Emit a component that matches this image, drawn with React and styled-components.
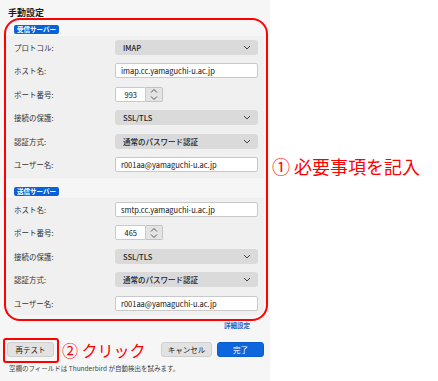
import React from 'react';
import styled, { createGlobalStyle } from 'styled-components';

// --- GLOBAL STYLES ---
const GlobalStyle = createGlobalStyle`
    body {
        margin: 0;
        background: #ffffff;
        font-family: "Noto Sans CJK JP", "Noto Sans", sans-serif;
        color: #222;
    }
`;

const Page = styled.div`
    position: relative;
    width: 438px;
    height: 381px;
    overflow: hidden;
`;

const Panel = styled.div`
    width: 270px;
    height: 381px;
    box-sizing: border-box;
    background: #f6f6f6;
    padding: 6px 6px 0 6px;
    display: flex;
    flex-direction: column;
`;

const Title = styled.div`
    font-size: 9px;
    font-weight: 700;
    line-height: 14px;
    padding-left: 2px;
    color: #1a1a1a;
`;

const Badge = styled.div`
    align-self: flex-start;
    margin: ${p => p.$top}px 0 2px 8px;
    background: #0a62d6;
    color: #fff;
    font-size: 6.5px;
    font-weight: 700;
    line-height: 9px;
    padding: 0 3px;
    border-radius: 2px;
`;

const Section = styled.div`
    background: #f0f0f0;
    display: grid;
    grid-template-columns: 101px 143px;
    row-gap: 8.4px;
    padding: ${p => p.$pt}px 6px ${p => p.$pb}px 8px;
    align-items: center;
`;

const Label = styled.div`
    font-size: 7.5px;
    color: #333;
    line-height: 15px;
`;

const Select = styled.div`
    height: 15px;
    box-sizing: border-box;
    background: #dadada;
    border-radius: 3px;
    display: flex;
    align-items: center;
    justify-content: space-between;
    padding: 0 7px 0 8px;
    font-size: 7.5px;
    font-weight: 500;
    color: #222;
`;

const Input = styled.div`
    height: 15px;
    box-sizing: border-box;
    background: #fff;
    border: 1px solid #c9c9c9;
    border-radius: 2px;
    display: flex;
    align-items: center;
    padding: 0 5px;
    font-size: 7.5px;
    color: #111;
`;

const PortWrap = styled.div`
    display: flex;
    height: 15px;
`;

const PortInput = styled(Input)`
    width: 31px;
    justify-content: flex-end;
    padding-right: 8px;
    border-radius: 2px 0 0 2px;
`;

const Spinner = styled.div`
    width: 17px;
    box-sizing: border-box;
    background: #e4e4e4;
    border: 1px solid #c3c3c3;
    border-left: none;
    border-radius: 0 2px 2px 0;
    display: flex;
    flex-direction: column;
    align-items: center;
    justify-content: space-around;
`;

const Link = styled.div`
    align-self: flex-end;
    margin: 6px 14px 0 0;
    font-size: 6.5px;
    font-weight: 700;
    color: #1a62c8;
    line-height: 9px;
`;

const ButtonRow = styled.div`
    display: flex;
    align-items: center;
    margin-top: 12px;
    padding-left: 1px;
`;

const Button = styled.div`
    height: 15px;
    box-sizing: border-box;
    width: ${p => p.$w}px;
    margin-left: ${p => p.$ml || 0}px;
    display: flex;
    align-items: center;
    justify-content: center;
    font-size: 7.5px;
    border-radius: 3px;
    background: ${p => (p.$primary ? '#0d66dc' : '#e2e2e2')};
    color: ${p => (p.$primary ? '#fff' : '#222')};
    border: 1px solid ${p => (p.$primary ? '#0b5ccc' : '#cfcfcf')};
`;

const Note = styled.div`
    margin-top: 7px;
    padding-left: 3px;
    font-size: 6.5px;
    color: #444;
    line-height: 9px;
`;

// --- annotations drawn over the screenshot ---
const RedBox = styled.div`
    position: absolute;
    left: ${p => p.$x}px;
    top: ${p => p.$y}px;
    width: ${p => p.$w}px;
    height: ${p => p.$h}px;
    box-sizing: border-box;
    border: 2px solid #ff0000;
    border-radius: ${p => p.$r}px;
    pointer-events: none;
`;

const Callout = styled.div`
    position: absolute;
    left: ${p => p.$x}px;
    top: ${p => p.$y}px;
    color: #ff0000;
    font-size: ${p => p.$size}px;
    line-height: 1;
    white-space: nowrap;
`;

const Chevron = () => (
    <svg width="8" height="5" viewBox="0 0 8 5">
        <path d="M1 1 L4 4 L7 1" fill="none" stroke="#444" strokeWidth="1" />
    </svg>
);

const Arrow = ({ up }) => (
    <svg width="8" height="4" viewBox="0 0 8 4">
        <path d={up ? 'M1 3.5 L4 0.5 L7 3.5' : 'M1 0.5 L4 3.5 L7 0.5'} fill="none" stroke="#555" strokeWidth="1" />
    </svg>
);

const Port = ({ value }) => (
    <PortWrap>
        <PortInput>{value}</PortInput>
        <Spinner>
            <Arrow up />
            <Arrow />
        </Spinner>
    </PortWrap>
);

const Drop = ({ children }) => (
    <Select>
        <span>{children}</span>
        <Chevron />
    </Select>
);

const App = () => (
    <Page>
        <GlobalStyle />
        <Panel>
            <Title>手動設定</Title>

            <Badge $top={5}>受信サーバー</Badge>
            <Section $pt={4} $pb={6}>
                <Label>プロトコル:</Label>
                <Drop>IMAP</Drop>
                <Label>ホスト名:</Label>
                <Input>imap.cc.yamaguchi-u.ac.jp</Input>
                <Label>ポート番号:</Label>
                <Port value="993" />
                <Label>接続の保護:</Label>
                <Drop>SSL/TLS</Drop>
                <Label>認証方式:</Label>
                <Drop>通常のパスワード認証</Drop>
                <Label>ユーザー名:</Label>
                <Input>r001aa@yamaguchi-u.ac.jp</Input>
            </Section>

            <Badge $top={9}>送信サーバー</Badge>
            <Section $pt={4} $pb={4}>
                <Label>ホスト名:</Label>
                <Input>smtp.cc.yamaguchi-u.ac.jp</Input>
                <Label>ポート番号:</Label>
                <Port value="465" />
                <Label>接続の保護:</Label>
                <Drop>SSL/TLS</Drop>
                <Label>認証方式:</Label>
                <Drop>通常のパスワード認証</Drop>
                <Label>ユーザー名:</Label>
                <Input>r001aa@yamaguchi-u.ac.jp</Input>
            </Section>

            <Link>詳細設定</Link>

            <ButtonRow>
                <Button $w={47}>再テスト</Button>
                <Button $w={51} $ml={107}>キャンセル</Button>
                <Button $w={47} $ml={5} $primary>完了</Button>
            </ButtonRow>
            <Note>空欄のフィールドは Thunderbird が自動検出を試みます。</Note>
        </Panel>

        <RedBox $x={4} $y={18} $w={264} $h={303} $r={16} />
        <RedBox $x={3} $y={338} $w={56} $h={25} $r={3} />
        <Callout $x={62} $y={342} $size={16}>② クリック</Callout>
        <Callout $x={272} $y={157} $size={18}>① 必要事項を記入</Callout>
    </Page>
);

export default App;
